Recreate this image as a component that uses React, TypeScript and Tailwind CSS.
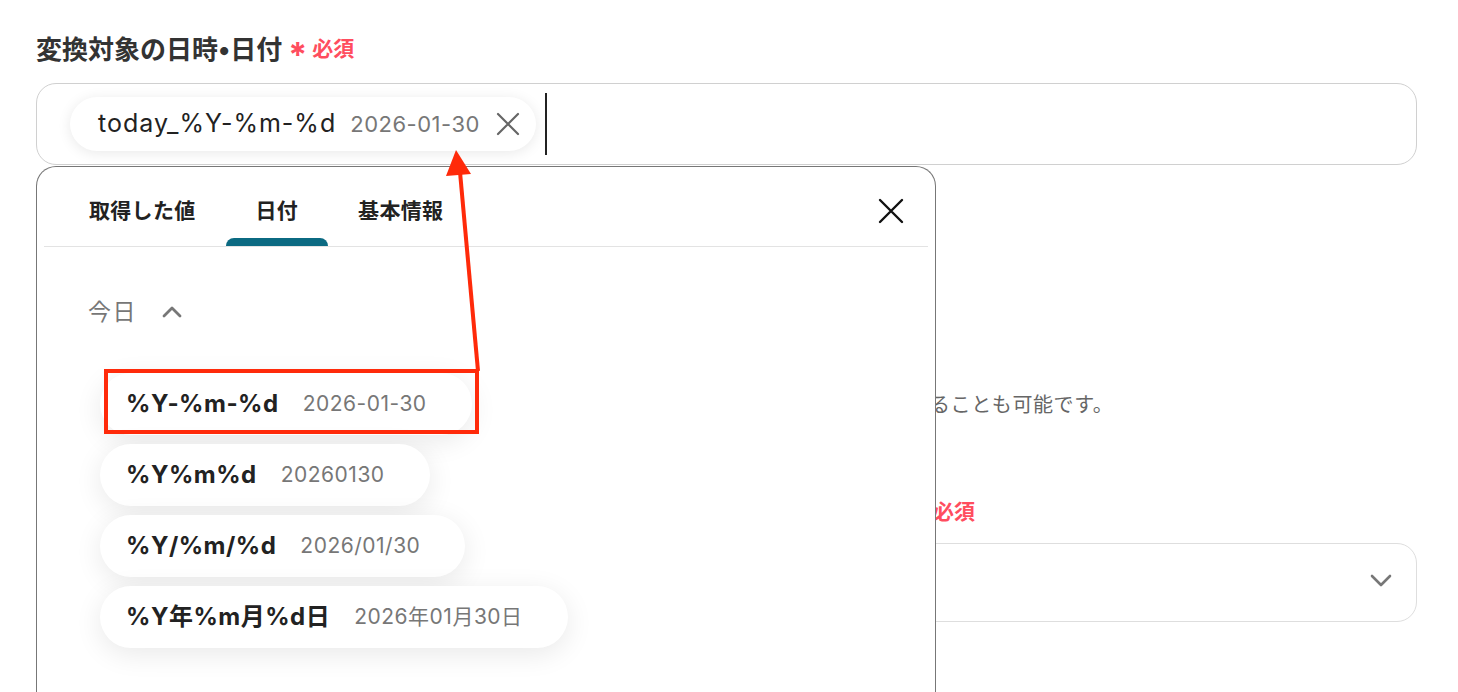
import React from "react";

const Chip = ({ code, value }: { code: string; value: string }) => (
  <div className="flex h-[62px] w-fit items-center rounded-full bg-white pl-[26px] pr-[45px] shadow-[0_6px_28px_rgba(0,0,0,0.09)]">
    <span className="text-[24px] font-bold tracking-[0.5px] text-[#222]">{code}</span>
    <span className="ml-[24px] text-[21px] tracking-[0.5px] text-[#777]">{value}</span>
  </div>
);

const Required = () => (
  <>
    <span className="ml-[6px] mt-[11px] text-[34px] font-bold leading-none text-[#ff4d5e]">*</span>
    <span className="ml-[5px] text-[21px] font-semibold text-[#ff4d5e]">必須</span>
  </>
);

export default function App() {
  return (
    <div className="relative h-[692px] w-full overflow-hidden bg-white font-['Inter','Noto_Sans_CJK_JP',sans-serif]">
      <div className="pl-[36px] pr-[41px] pt-[34px]">
        <div className="flex h-[30px] items-center">
          <span className="text-[26px] font-bold text-[#333]">変換対象の日時•日付</span>
          <Required />
        </div>
        <div className="mt-[19px] flex h-[82px] items-center rounded-[20px] border border-[#d0d0d0] pl-[33px]">
          <div className="flex h-[54px] items-center rounded-full bg-white pl-[28px] pr-[16px] shadow-[0_2px_14px_rgba(0,0,0,0.09)]">
            <span className="text-[25px] tracking-[1px] text-[#222]">today_%Y-%m-%d</span>
            <span className="ml-[14px] text-[22px] tracking-[0.5px] text-[#777]">2026-01-30</span>
            <svg className="ml-[16px]" width="24" height="24" viewBox="0 0 24 24" fill="none" stroke="#666" strokeWidth="2.2" strokeLinecap="round">
              <path d="M2 2 L22 22 M22 2 L2 22" />
            </svg>
          </div>
          <div className="ml-[9px] h-[62px] w-[2px] bg-[#222]" />
        </div>

        <p className="mt-[226px] whitespace-nowrap pl-[894px] text-[20px] leading-[28px] tracking-[0.6px] text-[#666]">
          ることも可能です。
        </p>

        <div className="mt-[78px] flex h-[30px] items-center whitespace-nowrap pl-[867px]">
          <Required />
        </div>
        <div className="mt-[16px] flex h-[79px] items-center justify-end rounded-[20px] border border-[#dedede] pr-[24px]">
          <svg className="-mt-[4px]" width="22" height="14" viewBox="0 0 22 14" fill="none" stroke="#777" strokeWidth="2.6" strokeLinecap="round" strokeLinejoin="round">
            <path d="M2 2 L11 11 L20 2" />
          </svg>
        </div>
      </div>

      {/* dropdown panel */}
      <div className="absolute left-[36px] top-[166px] h-[540px] w-[900px] rounded-t-[20px] border border-b-0 border-[#777] bg-white">
        <div className="relative mx-[7px] mt-[23px] flex h-[57px] items-stretch border-b border-[#e3e3e3] pl-[15px]">
          <div className="flex items-center px-[30px] pb-[14px] text-[21px] font-semibold tracking-[0.3px] text-[#222]">取得した値</div>
          <div className="relative flex items-center px-[30px] pb-[14px] text-[21px] font-semibold tracking-[0.3px] text-[#222]">
            日付
            <div className="absolute bottom-0 left-0 right-0 h-[8px] rounded-t-[8px] bg-[#0b6a82]" />
          </div>
          <div className="flex items-center px-[30px] pb-[14px] text-[21px] font-semibold tracking-[0.3px] text-[#222]">基本情報</div>
          <div className="ml-auto flex items-center pb-[14px] pr-[24px]">
            <svg width="26" height="26" viewBox="0 0 26 26" fill="none" stroke="#111" strokeWidth="2.4" strokeLinecap="round">
              <path d="M2 2 L24 24 M24 2 L2 24" />
            </svg>
          </div>
        </div>

        <div className="mt-[48px] flex items-center pl-[51px]">
          <span className="text-[23px] tracking-[1.5px] text-[#777]">今日</span>
          <svg className="ml-[24px]" width="22" height="14" viewBox="0 0 22 14" fill="none" stroke="#777" strokeWidth="2.8" strokeLinecap="round" strokeLinejoin="round">
            <path d="M3 11 L11 3 L19 11" />
          </svg>
        </div>

        <div className="mt-[43px] flex flex-col gap-[9px] pl-[63px]">
          <Chip code="%Y-%m-%d" value="2026-01-30" />
          <Chip code="%Y%m%d" value="20260130" />
          <Chip code="%Y/%m/%d" value="2026/01/30" />
          <Chip code="%Y年%m月%d日" value="2026年01月30日" />
        </div>
      </div>

      {/* annotation */}
      <svg className="pointer-events-none absolute left-0 top-0" width="1458" height="692" viewBox="0 0 1458 692">
        <rect x="106" y="371" width="371" height="61" fill="none" stroke="#ff2a0a" strokeWidth="4" />
        <path d="M478 371 L460 172" stroke="#ff2a0a" strokeWidth="4" fill="none" />
        <polygon points="456,150 446,176 471,174" fill="#ff2a0a" />
      </svg>
    </div>
  );
}
